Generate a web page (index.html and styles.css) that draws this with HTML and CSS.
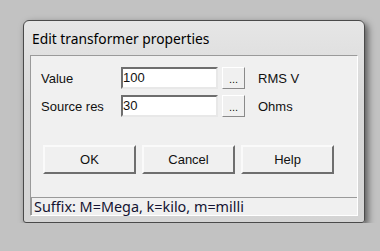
FILE: index.html
```html
<!DOCTYPE html>
<html>
  <head>
    <meta charset="utf-8">
    <title>Edit transformer properties</title>
    <link rel="stylesheet" href="styles.css">
  </head>
  <body>
    <div class="ventana">
      <div class="titulo">Edit transformer properties</div>
      <div class="cliente">
        <div class="fila">
          <span class="etiqueta">Value</span>
          <div class="caja">100</div>
          <div class="puntos">...</div>
          <span class="unidad">RMS V</span>
        </div>
        <div class="fila">
          <span class="etiqueta">Source res</span>
          <div class="caja">30</div>
          <div class="puntos">...</div>
          <span class="unidad">Ohms</span>
        </div>
        <div class="botones">
          <div class="boton">OK</div>
          <div class="boton">Cancel</div>
          <div class="boton">Help</div>
        </div>
        <div class="estado">Suffix: M=Mega, k=kilo, m=milli</div>
      </div>
    </div>
  </body>
</html>
```

FILE: styles.css
```css
body {
  margin: 0;
  padding: 20px 0 0 23px;
  background-color: #c2c2c2;
  font-family: "Liberation Sans", Arial, sans-serif;
}

.ventana {
  width: 328px;
  height: 195px;
  border: 1px solid #4a4a4a;
  border-radius: 6px 6px 3px 3px;
  background: linear-gradient(#e6e6e6, #d8d8d8 40%, #d4d4d4);
  box-shadow: 3px 3px 7px rgba(0, 0, 0, 0.55);
  padding: 0 6px 6px 6px;
  display: flex;
  flex-direction: column;
}

.titulo {
  height: 34px;
  line-height: 35px;
  padding-left: 2px;
  font-family: "Noto Sans", "Open Sans", sans-serif;
  font-size: 13.8px;
  color: #000;
}

.cliente {
  flex: 1;
  background-color: #f0f0f0;
  border: 1px solid #9a9a9a;
  border-right-color: #fff;
  border-bottom-color: #fff;
  display: flex;
  flex-direction: column;
  padding-top: 11px;
}

.fila {
  display: flex;
  align-items: center;
  height: 22px;
  margin-bottom: 6px;
  font-size: 13px;
  color: #111;
}

.etiqueta {
  width: 80px;
  padding-left: 10px;
}

.caja {
  width: 93px;
  height: 18px;
  background: #fff;
  border: 2px solid;
  border-color: #6e6e6e #e8e8e8 #e8e8e8 #6e6e6e;
  line-height: 18px;
  font-size: 13px;
}

.puntos {
  width: 21px;
  height: 20px;
  margin-left: 4px;
  border: 1px solid;
  border-color: #fff #8a8a8a #8a8a8a #fff;
  background: #f0f0f0;
  text-align: center;
  line-height: 22px;
  font-size: 11px;
}

.unidad {
  margin-left: 13px;
}

.botones {
  display: flex;
  gap: 6px;
  padding-left: 12px;
  margin-top: 22px;
}

.boton {
  width: 89px;
  height: 25px;
  border: 2px solid;
  border-color: #fafafa #6e6e6e #6e6e6e #fafafa;
  background: #f0f0f0;
  text-align: center;
  line-height: 25px;
  font-size: 13px;
  color: #111;
}

.estado {
  margin-top: auto;
  height: 17px;
  border-top: 1px solid #9a9a9a;
  border-left: 1px solid #9a9a9a;
  padding-left: 2px;
  line-height: 18px;
  font-family: "Noto Sans", "Open Sans", sans-serif;
  font-size: 14.4px;
  color: #141432;
}
```
